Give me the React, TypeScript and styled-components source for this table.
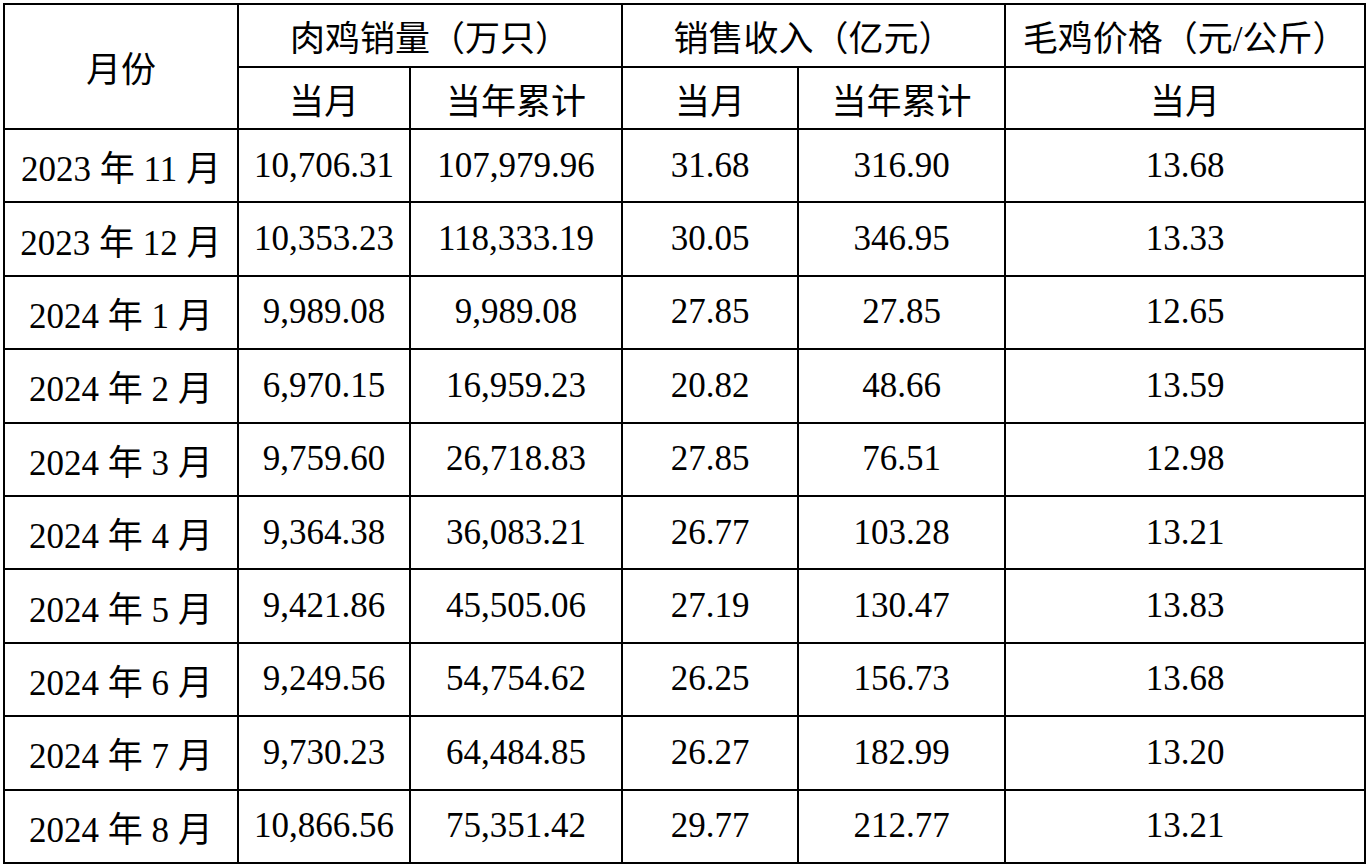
import React from 'react'
import styled, { createGlobalStyle } from 'styled-components'

const GlobalStyle = createGlobalStyle`
  html, body {
    margin: 0;
    padding: 0;
    background: #fff;
  }
  body {
    padding: 3px 0 0 3px;
    font-family: "Liberation Serif", "Noto Sans CJK SC", serif;
    color: #000;
  }
`

const Table = styled.table`
  border-collapse: collapse;
  table-layout: fixed;
  width: 1361px;
  font-family: "Liberation Serif", "Noto Sans CJK SC", serif;
  font-size: 35px;
  color: #000;
`

const HeadCell = styled.th<{ $h: number }>`
  border: 2px solid #000;
  font-weight: 400;
  text-align: center;
  vertical-align: middle;
  padding: 0;
  height: ${p => p.$h}px;
  white-space: nowrap;
`

const Cell = styled.td`
  border: 2px solid #000;
  text-align: center;
  vertical-align: middle;
  padding: 0;
  height: 71.4px;
  white-space: nowrap;
`

const widths = [234, 172, 212, 176, 207, 360]

type Row = [string, string, string, string, string, string]

const rows: Row[] = [
  ['2023 年 11 月', '10,706.31', '107,979.96', '31.68', '316.90', '13.68'],
  ['2023 年 12 月', '10,353.23', '118,333.19', '30.05', '346.95', '13.33'],
  ['2024 年 1 月', '9,989.08', '9,989.08', '27.85', '27.85', '12.65'],
  ['2024 年 2 月', '6,970.15', '16,959.23', '20.82', '48.66', '13.59'],
  ['2024 年 3 月', '9,759.60', '26,718.83', '27.85', '76.51', '12.98'],
  ['2024 年 4 月', '9,364.38', '36,083.21', '26.77', '103.28', '13.21'],
  ['2024 年 5 月', '9,421.86', '45,505.06', '27.19', '130.47', '13.83'],
  ['2024 年 6 月', '9,249.56', '54,754.62', '26.25', '156.73', '13.68'],
  ['2024 年 7 月', '9,730.23', '64,484.85', '26.27', '182.99', '13.20'],
  ['2024 年 8 月', '10,866.56', '75,351.42', '29.77', '212.77', '13.21'],
]

const App = () => {
  return (
    <>
      <GlobalStyle />
      <Table>
        <colgroup>
          {widths.map((w, i) => (
            <col key={i} style={{ width: w }} />
          ))}
        </colgroup>
        <thead>
          <tr>
            <HeadCell rowSpan={2} $h={61}>月份</HeadCell>
            <HeadCell colSpan={2} $h={61}>肉鸡销量（万只）</HeadCell>
            <HeadCell colSpan={2} $h={61}>销售收入（亿元）</HeadCell>
            <HeadCell $h={61}>毛鸡价格（元/公斤）</HeadCell>
          </tr>
          <tr>
            <HeadCell $h={60}>当月</HeadCell>
            <HeadCell $h={60}>当年累计</HeadCell>
            <HeadCell $h={60}>当月</HeadCell>
            <HeadCell $h={60}>当年累计</HeadCell>
            <HeadCell $h={60}>当月</HeadCell>
          </tr>
        </thead>
        <tbody>
          {rows.map(r => (
            <tr key={r[0]}>
              {r.map((v, i) => (
                <Cell key={i}>{v}</Cell>
              ))}
            </tr>
          ))}
        </tbody>
      </Table>
    </>
  )
}

export default App
